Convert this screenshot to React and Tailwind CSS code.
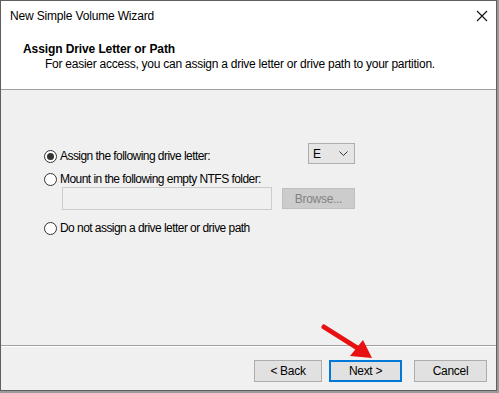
import React from "react";

function Radio({ checked }) {
  return (
    <span className="relative inline-block w-[13px] h-[13px] rounded-full border border-[#333333] bg-white shrink-0">
      {checked && (
        <span className="absolute left-[2px] top-[2px] w-[7px] h-[7px] rounded-full bg-[#333333]" />
      )}
    </span>
  );
}

export default function App() {
  return (
    <div
      className="w-[499px] h-[393px] bg-[#9a9a9a] text-[12px] text-black"
      style={{ fontFamily: '"Liberation Sans", Arial, sans-serif' }}
    >
      <div className="w-[497px] h-[391px] border border-[#5f5f5f] bg-[#f0f0f0] flex flex-col">
        {/* title bar */}
        <div className="h-[30px] bg-white flex items-center justify-between pl-[9px] pr-[4px]">
          <span className="tracking-[-0.17px]">New Simple Volume Wizard</span>
          <svg width="12" height="12" viewBox="0 0 12 12" className="mr-[4px]">
            <path d="M1 1 L11 11 M11 1 L1 11" stroke="#111" strokeWidth="1.1" fill="none" />
          </svg>
        </div>
        {/* header */}
        <div className="h-[58px] bg-white pl-[22px] pt-[11px]">
          <div className="font-bold leading-[15px] tracking-[-0.1px]">Assign Drive Letter or Path</div>
          <div className="pl-[22px] leading-[15px] tracking-[-0.25px]">
            For easier access, you can assign a drive letter or drive path to your partition.
          </div>
        </div>
        <div className="h-px bg-[#a0a0a0]" />
        {/* body */}
        <div className="flex-1 pt-[53px] pl-[43px] tracking-[-0.55px]">
          <div className="flex items-start h-[21px]">
            <div className="flex items-center h-[16px] mt-[5px] w-[264px]">
              <Radio checked />
              <span className="ml-[3px]">Assign the following drive letter:</span>
            </div>
            <div className="w-[47px] h-[21px] border border-[#adadad] bg-[#e5e5e5] flex items-center justify-between pl-[4px] pr-[6px] tracking-normal">
              <span>E</span>
              <svg width="9" height="6" viewBox="0 0 9 6">
                <path d="M0.5 0.5 L4.5 4.5 L8.5 0.5" stroke="#333" strokeWidth="1" fill="none" />
              </svg>
            </div>
          </div>
          <div className="flex items-center h-[16px] mt-[7px]">
            <Radio />
            <span className="ml-[3px]">Mount in the following empty NTFS folder:</span>
          </div>
          <div className="flex items-center ml-[18px] h-[23px]">
            <div className="w-[210px] h-[23px] border border-[#cccccc] bg-[#f0f0f0]" />
            <div className="ml-[10px] w-[73px] h-[21px] border border-[#bfbfbf] bg-[#cccccc] text-[#838383] flex items-center justify-center tracking-[-0.3px]">
              Browse...
            </div>
          </div>
          <div className="flex items-center h-[16px] mt-[10px]">
            <Radio />
            <span className="ml-[3px]">Do not assign a drive letter or drive path</span>
          </div>
        </div>
        <div className="h-px bg-[#a0a0a0]" />
        <div className="h-px bg-white" />
        {/* footer */}
        <div className="relative h-[43px] flex items-start pt-[13px] pl-[253px] tracking-[-0.3px]">
          <div className="w-[68px] h-[22px] border border-[#adadad] bg-[#e1e1e1] flex items-center justify-center">
            &lt; Back
          </div>
          <div className="ml-[7px] w-[73px] h-[22px] border-2 border-[#0078d7] bg-[#e1e1e1] flex items-center justify-center">
            Next &gt;
          </div>
          <div className="ml-[12px] w-[73px] h-[22px] border border-[#adadad] bg-[#e1e1e1] flex items-center justify-center">
            Cancel
          </div>
          <svg
            className="absolute left-[318px] top-[-25px]"
            width="60"
            height="40"
            viewBox="0 0 60 40"
          >
            <path d="M5 5 L40 27" stroke="#e81010" strokeWidth="5" strokeLinecap="round" fill="none" />
            <path d="M53 36 L31 34 L44 18 Z" fill="#e81010" />
          </svg>
        </div>
      </div>
    </div>
  );
}
